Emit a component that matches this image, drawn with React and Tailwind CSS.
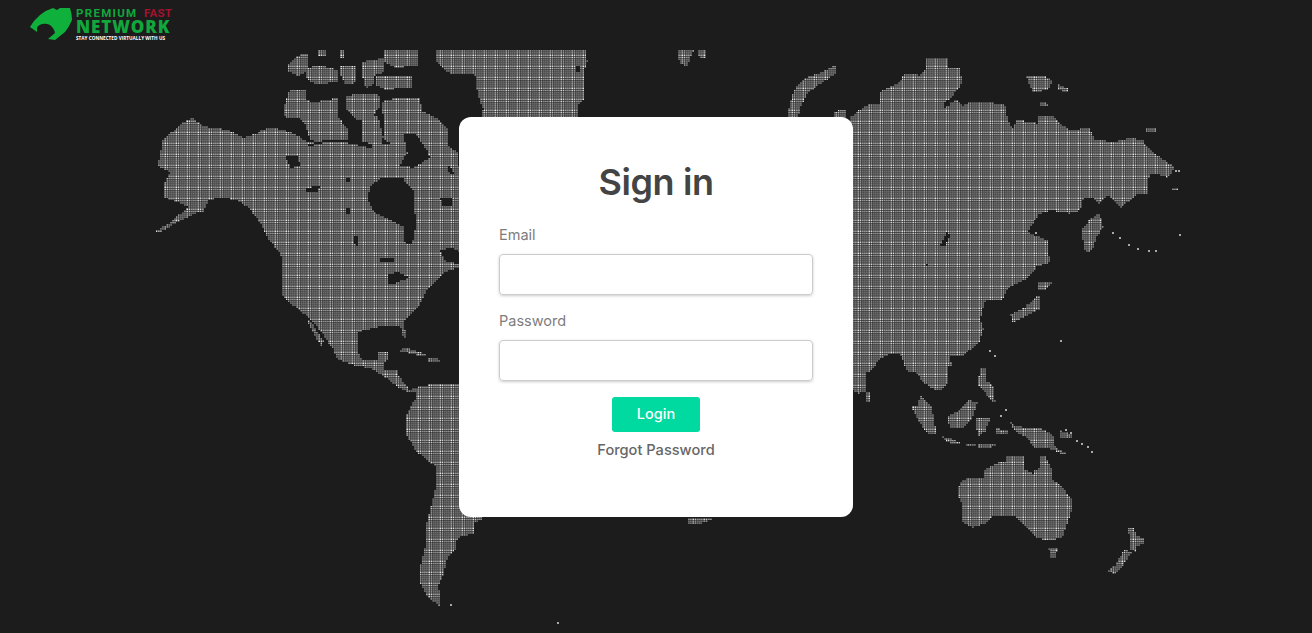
const amp = [0.95, 0.3, 0.85, 0.3, 0.55, 0.42, 0.55, 0.42, 0.55, 0.42, 0.55]

// one 11x11 tile of the dotted map texture
const tile = []
amp.forEach((ax, x) => {
  amp.forEach((ay, y) => {
    const v = Math.round(40 + 215 * ax * ay)
    tile.push(<rect key={x + '-' + y} x={x} y={y} width="1" height="1" fill={`rgb(${v},${v},${v})`} />)
  })
})

// turn a polygon into 2px stair steps so the coast looks like dots
const blocky = (points) => {
  const pts = points.split(' ').map(p => p.split(',').map(Number))
  const out = []
  pts.forEach(([x1, y1], i) => {
    const [x2, y2] = pts[(i + 1) % pts.length]
    const n = Math.max(1, Math.ceil(Math.max(Math.abs(x2 - x1), Math.abs(y2 - y1)) / 2))
    for (let k = 0; k < n; k++) {
      const x = Math.round((x1 + (x2 - x1) * k / n) / 2) * 2
      const y = Math.round((y1 + (y2 - y1) * k / n) / 2) * 2
      const next = Math.round((y1 + (y2 - y1) * (k + 1) / n) / 2) * 2
      out.push(x + ',' + y, x + ',' + next)
    }
  })
  return out.join(' ')
}

const land = [
  // north america + central + south america
  '158,165 163,140 183,122 193,118 203,126 230,130 243,138 257,133 272,127 283,130 297,135 307,142 340,143 370,145 400,143 430,150 459,165 470,165 470,267 458,267 443,273 437,277 427,287 417,307 403,322 407,337 403,338 400,325 380,326 358,332 358,353 362,360 377,360 378,352 387,352 387,358 383,362 383,370 398,370 397,373 410,390 415,388 440,383 470,385 470,500 483,518 473,522 473,533 457,537 455,547 450,553 447,558 443,573 438,583 440,593 440,607 427,597 420,583 420,567 425,547 425,530 430,510 435,490 435,468 417,453 405,433 405,417 415,400 415,392 407,392 397,388 383,377 370,368 353,365 337,360 333,350 313,323 302,313 283,297 282,257 267,237 260,223 250,210 240,202 222,197 208,200 203,212 193,213 170,226 157,234 156,232 170,223 187,208 183,205 163,198 163,185 170,172 160,168',
  // baja
  '306,318 312,322 323,340 322,347 316,340',
  // arctic canada
  '283,110 290,90 305,90 307,100 313,102 337,98 337,115 347,128 347,143 320,143 310,140 305,125 297,118 285,117',
  '345,97 362,93 380,95 380,105 372,115 363,120 355,120 345,108',
  '362,118 378,115 383,135 380,145 362,145',
  '382,102 400,97 420,98 422,110 437,118 447,128 447,143 458,152 458,170 425,152 403,147 385,142',
  '287,67 300,55 309,53 308,70 298,76 288,72',
  '305,70 320,65 337,70 337,82 313,84 305,78',
  '317,50 325,50 325,56 318,56',
  '340,65 355,65 356,82 345,85 340,75',
  '363,62 372,60 383,58 383,72 375,74 372,85 365,88 362,75',
  '383,50 418,50 418,65 395,68 383,62',
  '377,75 412,75 412,87 385,90 375,85',
  '340,50 343,50 343,57 340,57',
  // greenland
  '437,49 585,49 587,60 583,73 583,97 577,103 577,117 481,117 483,110 480,103 478,93 475,83 475,77 470,73 450,73 445,72 435,60',
  // iceland, uk bits
  '677,50 693,50 690,58 686,67 679,62',
  '697,49 706,49 707,57 700,58 697,54',
  '687,517 713,517 705,521 697,524 688,523',
  // novaya zemlya
  '787,117 791,100 798,85 806,78 820,73 835,65 836,73 822,82 808,92 800,105 798,117',
  '833,112 846,110 846,117 833,117',
  // asia
  '850,118 868,105 880,103 880,92 900,82 907,73 920,75 925,70 927,57 947,57 947,68 960,68 962,83 950,98 943,105 957,100 963,105 972,102 990,102 1005,105 1008,120 1013,128 1017,120 1037,123 1038,115 1053,115 1070,130 1090,128 1095,140 1117,142 1130,138 1143,140 1157,155 1175,167 1167,178 1152,173 1147,180 1148,193 1135,195 1120,207 1107,193 1097,203 1092,197 1083,198 1080,210 1068,213 1050,210 1040,213 1027,232 1047,240 1050,262 1035,267 1027,277 1008,287 1002,300 985,300 980,317 983,327 978,343 963,355 950,355 952,365 947,367 948,383 937,392 922,382 915,373 907,372 900,355 890,353 880,358 870,370 865,373 865,392 857,393 850,390',
  '1100,213 1103,225 1097,235 1092,250 1085,252 1081,232 1090,220',
  '1040,295 1039,308 1025,315 1012,322 1010,315 1025,308 1034,300',
  '1037,282 1052,282 1045,290 1037,290',
  '1025,75 1045,75 1052,80 1048,90 1032,92',
  '1057,83 1068,88 1068,92 1057,90',
  '1040,101 1048,103 1048,105 1040,105',
  '1145,127 1155,127 1155,132 1145,132',
  '1172,187 1180,189 1180,191 1172,190',
  // south east asia
  '865,392 870,392 871,402 865,402',
  '920,395 932,405 935,425 938,435 927,433 918,422 910,405 918,405',
  '947,418 960,410 970,400 977,402 972,418 962,428 950,427',
  '980,367 985,367 985,380 993,385 995,400 993,403 985,393 978,385',
  '977,418 990,418 985,430 978,435 976,425',
  '938,435 950,438 962,443 962,445 945,442',
  '965,443 975,444 975,446 965,445',
  '977,444 995,444 990,448 978,448',
  '1007,420 1015,425 1027,428 1040,427 1053,435 1053,443 1057,448 1065,452 1063,455 1052,450 1045,447 1033,447 1027,438 1015,432',
  '995,428 1007,430 1007,433 995,433',
  '1060,430 1072,434 1072,437 1060,437',
  // australia, nz
  '957,495 960,482 970,478 983,477 985,470 997,463 1005,462 1007,455 1025,457 1023,468 1033,473 1040,468 1040,457 1045,455 1052,470 1053,480 1060,483 1072,497 1073,505 1068,520 1062,537 1050,540 1035,538 1025,528 1013,515 1002,515 990,517 985,523 972,527 963,523 962,503',
  '1048,547 1058,547 1055,558 1050,558',
  '1127,527 1133,527 1137,535 1143,538 1143,543 1137,545 1135,552 1130,550 1130,540',
  '1125,550 1131,552 1122,565 1115,573 1113,574 1108,572 1115,565',
  // caribbean
  '395,350 407,348 427,355 415,355 403,352',
  '427,358 440,359 440,362 428,362',
]

const water = [
  '370,187 383,177 403,178 413,190 415,213 415,227 412,243 405,243 403,227 390,220 373,212 368,200',
  '403,133 417,135 427,150 430,157 413,168 400,165 407,153',
  '310,146 330,141 350,143 372,148 372,144 350,140 328,139 308,144',
  '285,157 298,155 300,165 290,168',
  '305,190 320,185 316,192 307,193',
  '377,257 395,257 392,262 380,262',
  '387,275 400,272 410,277 395,283 388,283',
  '440,250 452,248 470,255 470,265 445,262',
  '440,197 452,198 452,205 442,205',
  '447,165 452,167 454,175 448,172',
  '354,236 357,236 359,245 355,245',
  '940,245 948,232 950,235 943,247',
  '943,103 950,100 950,104 944,107',
  '346,178 350,178 350,182 346,182',
  '345,208 350,208 350,213 345,213',
  '925,263 928,263 928,265 925,265',
  '575,66 580,66 580,72 575,72',
]

const dots = [
  [450, 604], [557, 622], [1175, 170], [1178, 170], [1155, 250], [1148, 250], [1112, 232], [1119, 237],
  [1128, 244], [1137, 248], [1179, 234], [1060, 340], [1076, 440], [1081, 443], [1087, 446], [1091, 451],
  [994, 355], [989, 350], [1005, 409], [1000, 415], [1065, 429], [1070, 432], [1035, 232],
]

function WorldMap() {
  return (
    <svg className="absolute inset-0" width="1312" height="633" viewBox="0 0 1312 633" shapeRendering="crispEdges">
      <defs>
        <pattern id="dots" width="11" height="11" patternUnits="userSpaceOnUse">
          {tile}
        </pattern>
      </defs>
      {land.map((p, i) => <polygon key={i} points={blocky(p)} fill="url(#dots)" />)}
      {water.map((p, i) => <polygon key={i} points={blocky(p)} fill="#1c1c1c" />)}
      {dots.map(([x, y], i) => <rect key={i} x={x} y={y} width="2" height="2" fill="#aaa" />)}
    </svg>
  )
}

function Logo() {
  return (
    <div className="absolute top-0 left-[30px] flex font-['Open_Sans',sans-serif]">
      <svg width="44" height="42" viewBox="30 0 44 42" className="mr-[2px]" shapeRendering="geometricPrecision">
        <path
          d="M30 27 Q34 20 40 15 Q46 10 53 8 L57 10 L60 8 L70 8 Q72 14 72 20 Q69 27 65 32 L55 40 L48 39 L55 33 Q54 28 50 25 Q46 23 42 24 Q38 25 37 28 L37 32 Z"
          fill="#10b03c"
        />
      </svg>
      <div className="flex flex-col pt-[7px] w-[96px]">
        <div className="flex justify-between items-center text-[11.5px] leading-[12px] font-bold font-['Roboto',sans-serif]">
          <span className="text-[#10a83c] tracking-[1.3px]">PREMIUM</span>
          <span className="text-[#a3122f] tracking-[0.2px]">FAST</span>
        </div>
        <div className="text-[#10a83c] text-[17px] leading-[15px] font-extrabold tracking-[0.9px]">NETWORK</div>
        <div className="mt-[1px] text-white text-[4.7px] leading-[6px] font-bold whitespace-nowrap">STAY CONNECTED VIRTUALLY WITH US</div>
      </div>
    </div>
  )
}

export default function App() {
  return (
    <div className="relative h-[633px] w-full overflow-hidden bg-[#1c1c1c] font-['Inter',sans-serif]">
      <WorldMap />
      <Logo />
      <div className="relative flex h-full items-center justify-center">
        <div className="w-[394px] h-[400px] bg-white rounded-[12px] px-[40px] pt-[39px]">
          <h1 className="text-center text-[36px] leading-[52px] font-semibold tracking-[-0.4px] text-[#444444] mb-[17px]">Sign in</h1>
          <label className="block text-[14.5px] leading-[20px] text-[#7d7d7d] mb-[9px]">Email</label>
          <input type="email" className="block w-full h-[41px] border border-[#cccccc] rounded-[4px] shadow-[0_1px_3px_rgba(0,0,0,0.2)] mb-[16px]" />
          <label className="block text-[14.5px] leading-[20px] text-[#7d7d7d] mb-[9px]">Password</label>
          <input type="password" className="block w-full h-[41px] border border-[#cccccc] rounded-[4px] shadow-[0_1px_3px_rgba(0,0,0,0.2)] mb-[16px]" />
          <div className="flex flex-col items-center">
            <button className="w-[88px] h-[35px] bg-[#00d9a0] rounded-[3px] text-white text-[14.5px] font-medium">Login</button>
            <a className="mt-[8px] text-[14.6px] leading-[20px] font-medium text-[#666666]">Forgot Password</a>
          </div>
        </div>
      </div>
    </div>
  )
}
